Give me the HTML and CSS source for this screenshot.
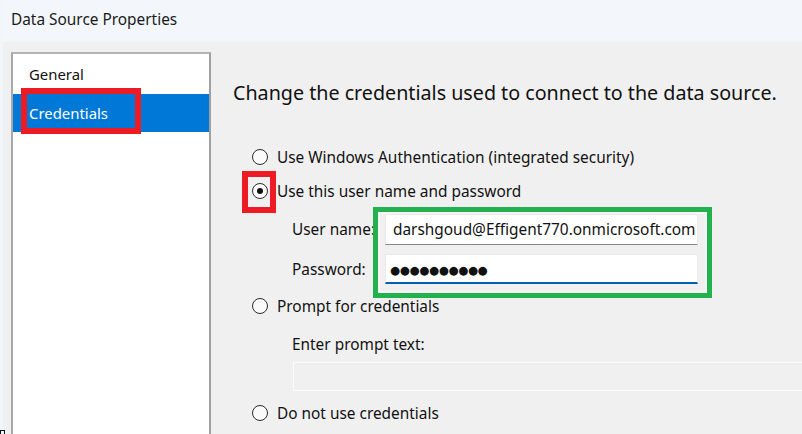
FILE: index.html
```html
<!DOCTYPE html>
<html>
<head>
<meta charset="utf-8">
<title>Data Source Properties</title>
<link rel="stylesheet" href="styles.css">
</head>
<body>
<div class="window">
  <div class="titlebar">Data Source Properties</div>
  <div class="main">
    <div class="sidebar">
      <ul class="nav">
        <li class="nav-item">General</li>
        <li class="nav-item active">Credentials<span class="mark mark-red nav-mark"></span></li>
      </ul>
    </div>
    <div class="content">
      <h1 class="heading">Change the credentials used to connect to the data source.</h1>
      <div class="options">
        <div class="radio-row"><span class="radio"></span><span class="radio-label">Use Windows Authentication (integrated security)</span></div>
        <div class="radio-row"><span class="radio checked"><span class="mark mark-red radio-mark"></span></span><span class="radio-label">Use this user name and password</span></div>
        <div class="fields">
          <div class="field-row"><span class="field-label">User name:</span><div class="input">darshgoud@Effigent770.onmicrosoft.com</div></div>
          <div class="field-row"><span class="field-label">Password:</span><div class="input focused"><span class="dots">●●●●●●●●●●</span></div></div>
          <span class="mark mark-green"></span>
        </div>
        <div class="radio-row"><span class="radio"></span><span class="radio-label">Prompt for credentials</span></div>
        <div class="prompt">
          <div class="prompt-label">Enter prompt text:</div>
          <div class="input disabled"></div>
        </div>
        <div class="radio-row"><span class="radio"></span><span class="radio-label">Do not use credentials</span></div>
      </div>
    </div>
  </div>
  <span class="corner"></span>
</div>
</body>
</html>
```
FILE: styles.css
```css
html, body {
  margin: 0;
  padding: 0;
}
body {
  width: 802px;
  height: 434px;
  overflow: hidden;
  background: #f0f0f0;
  font-family: "Noto Sans", "Open Sans", sans-serif;
  color: #111;
}
.window {
  position: relative;
  height: 434px;
  display: flex;
  flex-direction: column;
  border-left: 3px solid #f2f5fa;
  box-sizing: border-box;
}
.titlebar {
  height: 42px;
  flex: none;
  background: #f3f6fb;
  padding-left: 8px;
  font-size: 15.4px;
  line-height: 40px;
  color: #1a1a1a;
}
.main {
  flex: 1;
  display: flex;
  min-height: 0;
}
.sidebar {
  flex: none;
  width: 200px;
  margin: 10px 0 -20px 8px;
  background: #fff;
  border: 2px solid #b4b4b4;
  border-right-color: #a0a0a0;
  border-left-color: #a8a8a8;
  box-sizing: border-box;
}
.nav {
  list-style: none;
  margin: 0;
  padding: 0;
}
.nav-item {
  position: relative;
  height: 40px;
  line-height: 40px;
  padding-left: 16px;
  font-size: 14.9px;
  color: #111;
}
.nav-item.active {
  height: 38px;
  line-height: 38px;
  background: #0078d7;
  color: #fff;
}
.mark {
  position: absolute;
  box-sizing: border-box;
  pointer-events: none;
}
.mark-red {
  border: 6px solid #ed1c24;
}
.nav-mark {
  left: 8px;
  top: -6px;
  width: 120px;
  height: 46px;
}
.content {
  flex: 1;
  padding: 37px 0 0 22px;
  min-width: 0;
}
.heading {
  margin: 0;
  font-weight: normal;
  font-size: 19.7px;
  line-height: 28px;
  color: #111;
  white-space: nowrap;
}
.options {
  margin-top: 33px;
  padding-left: 19px;
}
.radio-row {
  display: flex;
  align-items: center;
  height: 34px;
  font-size: 15.4px;
}
.radio {
  position: relative;
  flex: none;
  width: 16px;
  height: 16px;
  box-sizing: border-box;
  border: 1.5px solid #2b2b2b;
  border-radius: 50%;
  background: #fafafa;
  margin-right: 9px;
}
.radio.checked::after {
  content: "";
  position: absolute;
  left: 50%;
  top: 50%;
  width: 6px;
  height: 6px;
  margin: -3px 0 0 -3px;
  border-radius: 50%;
  background: #111;
}
.radio-mark {
  left: -11px;
  top: -13px;
  width: 34px;
  height: 42px;
}
.fields {
  position: relative;
  padding-left: 40px;
  padding-top: 1px;
  padding-bottom: 0;
}
.field-row {
  display: flex;
  align-items: center;
  height: 40px;
  font-size: 15.4px;
}
.field-label {
  width: 93px;
  flex: none;
}
.input {
  box-sizing: border-box;
  width: 313px;
  height: 31px;
  background: #fff;
  border: 1px solid #e9e9e9;
  border-bottom: 1px solid #8a8a8a;
  padding-left: 7px;
  font-size: 15.4px;
  line-height: 29px;
  color: #111;
  white-space: nowrap;
}
.input.focused {
  height: 30px;
  border-bottom: 2px solid #005fb8;
  line-height: 27px;
  padding-left: 4px;
}
.dots {
  font-family: "DejaVu Sans", sans-serif;
  font-size: 11.5px;
  letter-spacing: -0.3px;
}
.mark-green {
  left: 121px;
  top: -1px;
  width: 339px;
  height: 91px;
  border: 5px solid #22b14c;
  box-shadow: inset 0 0 0 2px #f8f8f8;
}
.prompt {
  padding-left: 40px;
  padding-top: 12px;
  padding-bottom: 5px;
}
.prompt-label {
  font-size: 15.4px;
  line-height: 20px;
  height: 20px;
}
.input.disabled {
  width: 540px;
  height: 29px;
  margin-top: 7px;
  margin-left: 1px;
  background: #f0f0f0;
  border: 1px solid #fbfbfb;
}
.corner {
  position: absolute;
  left: -3px;
  bottom: -1px;
  width: 5px;
  height: 5px;
  border: 1px solid #111;
  box-sizing: border-box;
}
```
